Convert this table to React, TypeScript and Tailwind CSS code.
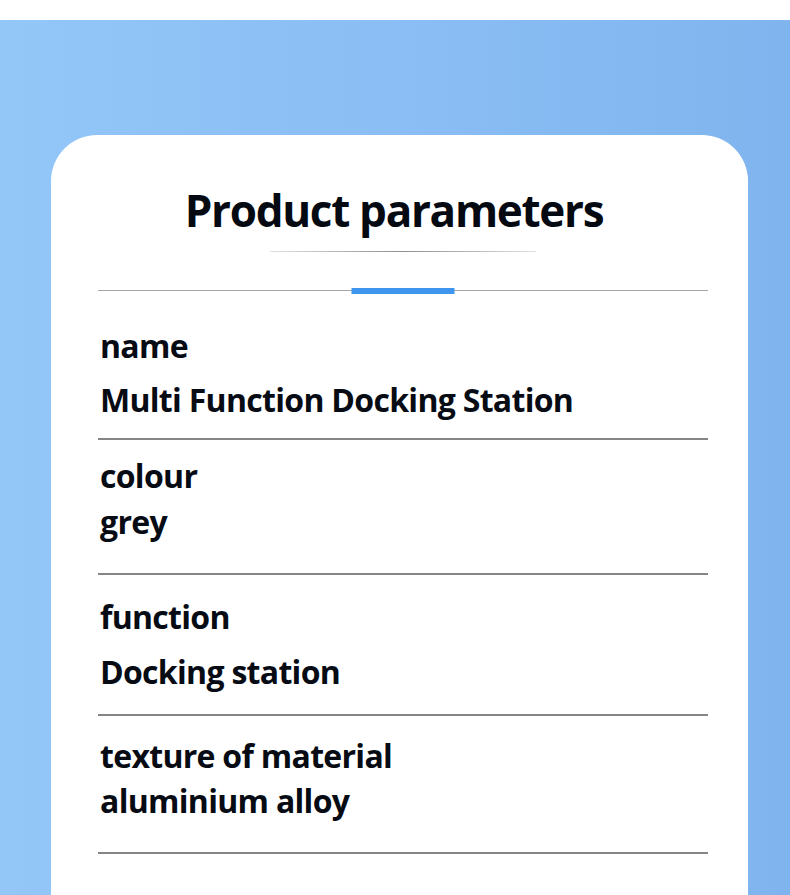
import React from "react";

const rows = [
  { label: "name", value: "Multi Function Docking Station", pt: "pt-[33px]", gap: "mt-[10px]", pb: "pb-[16px]" },
  { label: "colour", value: "grey", pt: "pt-[14px]", gap: "mt-[2px]", pb: "pb-[29px]" },
  { label: "function", value: "Docking station", pt: "pt-[20px]", gap: "mt-[11px]", pb: "pb-[20px]" },
  { label: "texture of material", value: "aluminium alloy", pt: "pt-[18px]", gap: "mt-[1px]", pb: "pb-[29px]" },
];

export default function App() {
  return (
    <div
      className="h-[895px] w-[790px] overflow-hidden bg-white"
      style={{ fontFamily: '"Open Sans", "Noto Sans", sans-serif' }}
    >
      <div className="mt-[20px] h-[875px] bg-gradient-to-r from-[#93c7f8] via-[#8abef4] to-[#7fb4ee] pt-[115px] pl-[51px]">
        <div className="w-[697px] h-[900px] rounded-t-[46px] bg-white pt-[47px] pl-[47px] pr-[40px]">
          <h1 className="pr-[18px] text-center text-[44px] leading-[56px] font-bold text-[#050a12] tracking-[-1.3px]">
            Product parameters
          </h1>
          <div className="mx-auto mt-[13px] h-[1px] w-[266px] bg-gradient-to-r from-[#e0e0e0] via-[#8f8f8f] to-[#e0e0e0]" />
          <div className="relative mt-[38px] h-[1px] w-full bg-[#a6a6a6]">
            <div className="absolute left-1/2 top-[-2px] h-[6px] w-[103px] -translate-x-1/2 bg-[#3f95ee]" />
          </div>
          {rows.map((r) => (
            <div key={r.label} className={`${r.pt} ${r.pb} pl-[2px] border-b-2 border-[#858585]`}>
              <div className="text-[32px] leading-[44px] font-bold tracking-[-0.7px] text-[#070b14]">{r.label}</div>
              <div className={`${r.gap} text-[32px] leading-[44px] font-bold tracking-[-0.7px] text-[#070b14]`}>{r.value}</div>
            </div>
          ))}
        </div>
      </div>
    </div>
  );
}
